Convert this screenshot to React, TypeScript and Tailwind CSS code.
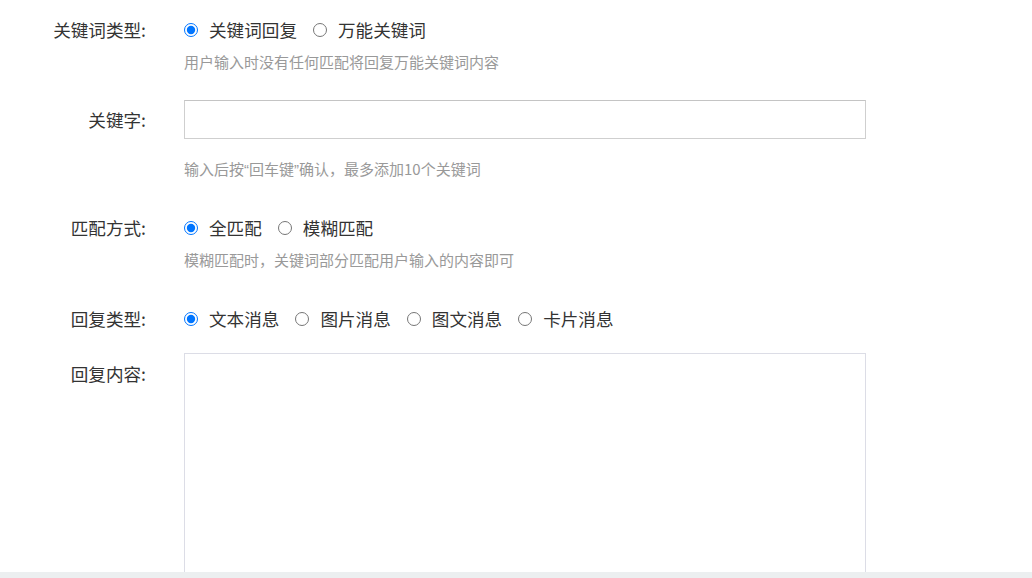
import React from 'react';

const font = { fontFamily: '"Noto Sans CJK SC", "Noto Sans", sans-serif' };

type Opt = { label: string; checked?: boolean };

const RadioGroup: React.FC<{ name: string; options: Opt[] }> = ({ name, options }) => (
  <div className="flex items-center h-[24px]">
    {options.map((o) => (
      <label key={o.label} className="flex items-center mr-[16px] text-[17.6px] leading-[24px] text-[#333]">
        <input
          type="radio"
          name={name}
          defaultChecked={o.checked}
          className="m-0 w-[14px] h-[14px]"
        />
        <span className="ml-[11px]">{o.label}</span>
      </label>
    ))}
  </div>
);

const Label: React.FC<{ text: string }> = ({ text }) => (
  <div className="w-[146px] shrink-0 text-right text-[17.6px] leading-[24px] text-[#333]">{text}</div>
);

const Hint: React.FC<{ children: React.ReactNode; className?: string }> = ({ children, className }) => (
  <div className={`text-[15px] leading-[20px] text-[#999] ${className ?? ''}`}>{children}</div>
);

const q = { fontFamily: '"Liberation Sans", sans-serif' };

export default function App() {
  return (
    <div className="w-[1032px] h-[578px] overflow-hidden bg-[#eceff0]" style={font}>
      <div className="h-[572px] bg-white overflow-hidden pt-[18px]">
        {/* keyword type */}
        <div className="flex">
          <Label text="关键词类型:" />
          <div className="ml-[38px]">
            <RadioGroup
              name="ktype"
              options={[{ label: '关键词回复', checked: true }, { label: '万能关键词' }]}
            />
            <Hint className="mt-[10px]">用户输入时没有任何匹配将回复万能关键词内容</Hint>
          </div>
        </div>

        {/* keyword */}
        <div className="flex items-center mt-[28px]">
          <Label text="关键字:" />
          <input
            type="text"
            className="ml-[38px] w-[682px] h-[39px] border border-[#cfcfcf] border-t-[#c4c4c4] outline-none px-2 text-[15px]"
          />
        </div>
        <div className="flex mt-[20px]">
          <div className="w-[146px] shrink-0" />
          <Hint className="ml-[38px]">
            输入后按<span style={q}>“</span>回车键<span style={q}>”</span>确认，最多添加10个关键词
          </Hint>
        </div>

        {/* match mode */}
        <div className="flex mt-[36px]">
          <Label text="匹配方式:" />
          <div className="ml-[38px]">
            <RadioGroup
              name="match"
              options={[{ label: '全匹配', checked: true }, { label: '模糊匹配' }]}
            />
            <Hint className="mt-[10px]">模糊匹配时，关键词部分匹配用户输入的内容即可</Hint>
          </div>
        </div>

        {/* reply type */}
        <div className="flex mt-[37px]">
          <Label text="回复类型:" />
          <div className="ml-[38px]">
            <RadioGroup
              name="rtype"
              options={[
                { label: '文本消息', checked: true },
                { label: '图片消息' },
                { label: '图文消息' },
                { label: '卡片消息' },
              ]}
            />
          </div>
        </div>

        {/* reply content */}
        <div className="flex mt-[22px]">
          <div className="pt-[9px]">
            <Label text="回复内容:" />
          </div>
          <textarea className="ml-[38px] w-[682px] h-[230px] border border-[#dcdde6] outline-none resize-none p-2 text-[15px]" />
        </div>
      </div>
    </div>
  );
}
